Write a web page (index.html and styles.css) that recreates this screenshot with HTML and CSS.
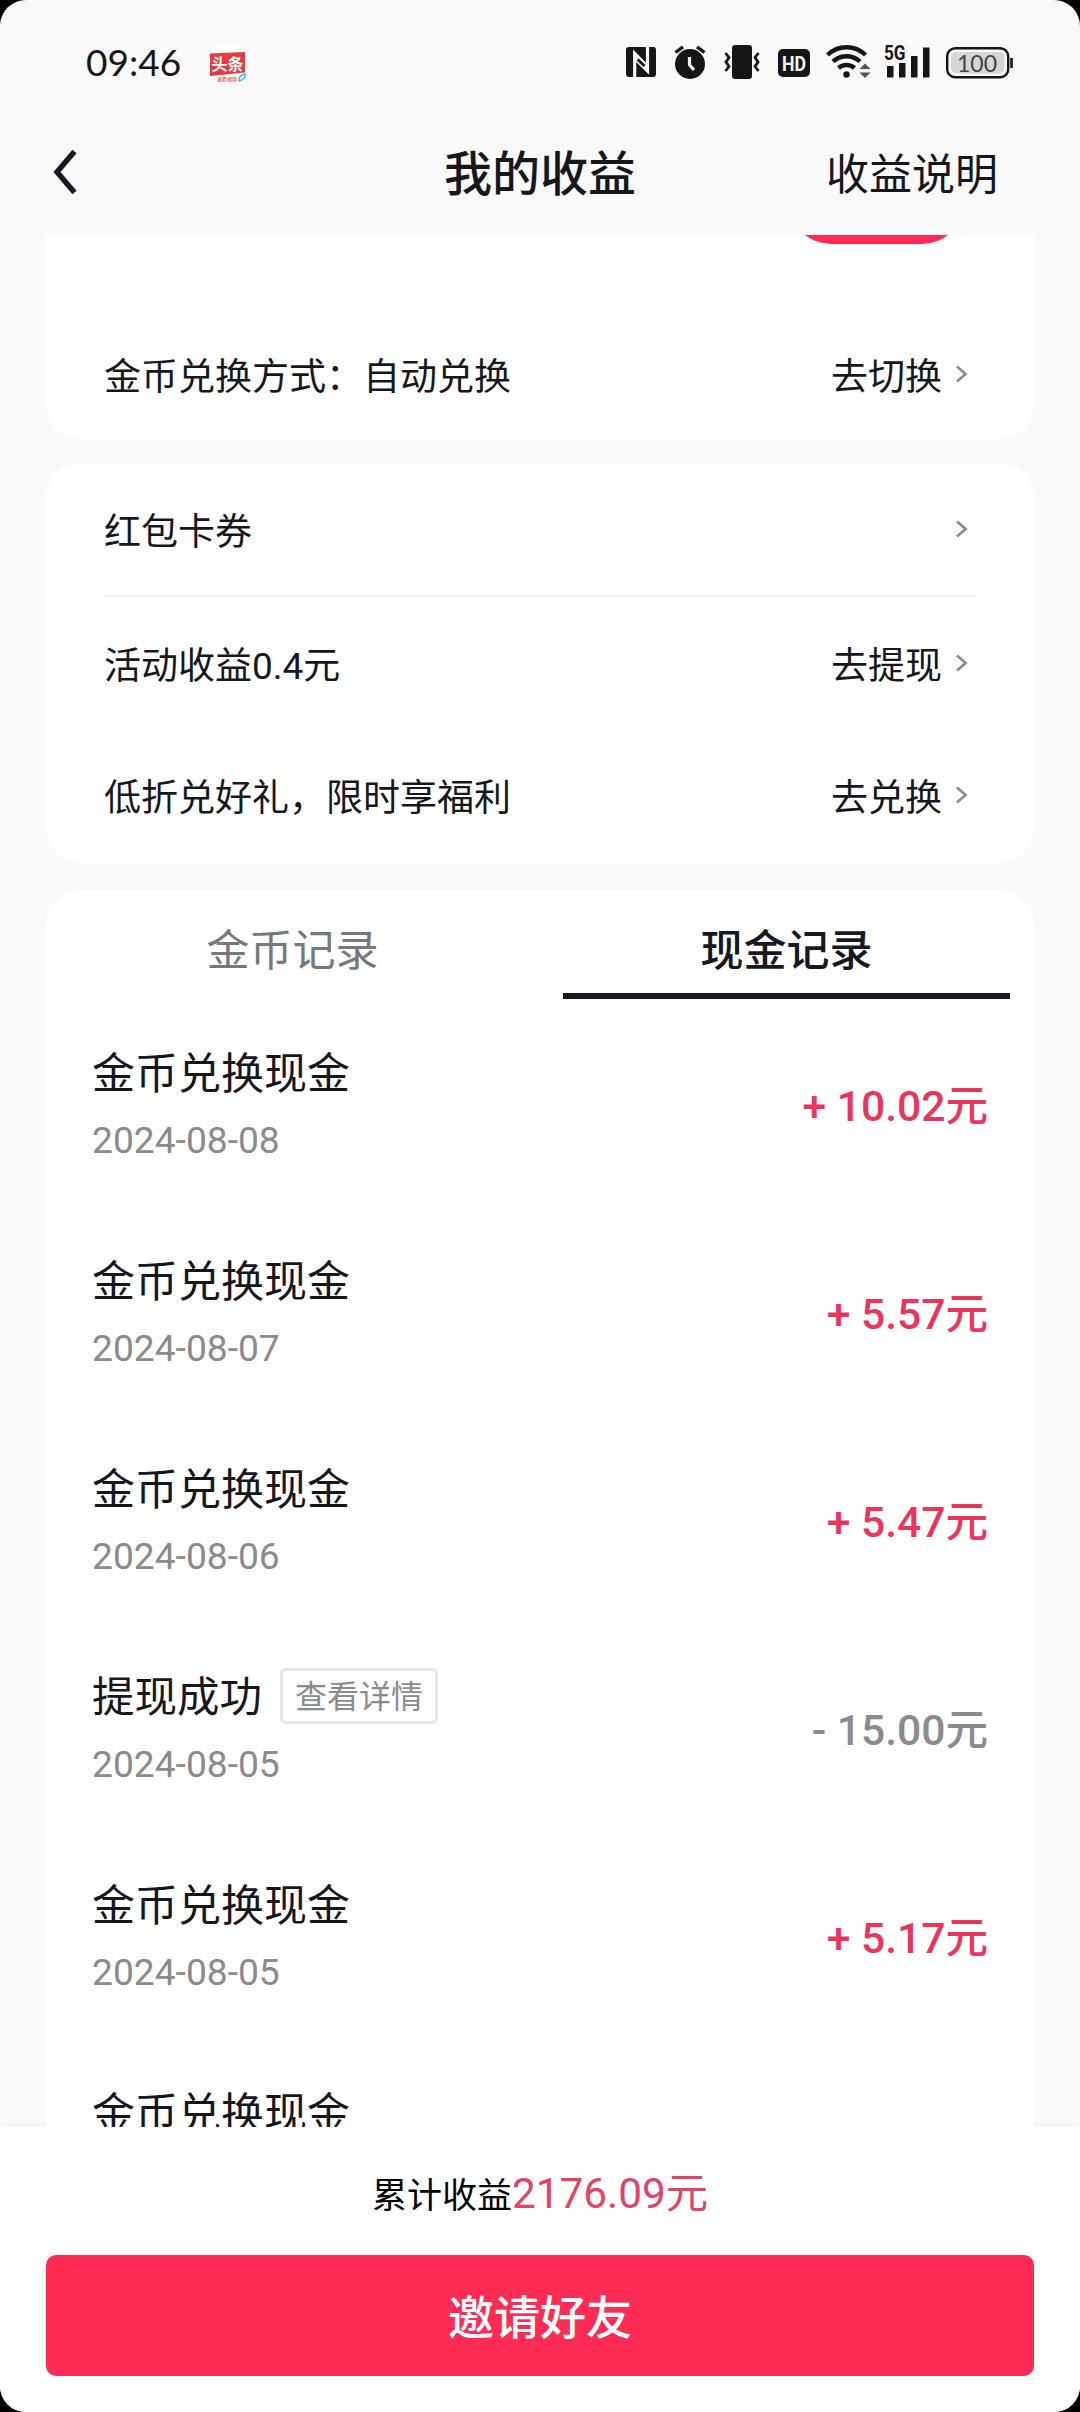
FILE: index.html
```html
<!DOCTYPE html>
<html lang="zh-CN">
<head>
<meta charset="utf-8">
<title>我的收益</title>
<link rel="stylesheet" href="styles.css">
</head>
<body>
<svg width="0" height="0" class="defs" aria-hidden="true">
  <symbol id="chevron" viewBox="0 0 12 18"><path d="M1 1.500 9.500 9 1 16.500" fill="none" stroke="#8d8d8f" stroke-width="2.800"/></symbol>
</svg>
<div class="screen">
  <div class="status">
    <span class="clock">09:46</span>
    <svg class="app" width="38" height="38" viewBox="0 0 38 38">
      <rect width="38" height="38" rx="8" fill="#fff"/>
      <path d="M1 8.500 36 7V27.500L1 31Z" fill="#e63a42"/>
      <text x="18.500" y="24.500" text-anchor="middle" class="app-name">头条</text>
      <text x="18" y="35.500" text-anchor="middle" class="app-sub">速看视频</text>
      <path d="M30 36q-1-5 6-7q1 5-6 7Z" fill="none" stroke="#3bbbd0" stroke-width="1.500"/>
    </svg>
    <div class="tray">
      <svg class="nfc" width="30" height="30" viewBox="0 0 30 30">
        <rect width="30" height="30" rx="3" fill="#161616"/>
        <path d="M8.700 30V6.500L21.500 19.500" fill="none" stroke="#f9f9f9" stroke-width="3.200"/>
        <path d="M21.500 0V24L9 11.500" fill="none" stroke="#f9f9f9" stroke-width="3.200"/>
        <path d="M11.700 12.500 18.500 19" stroke="#161616" stroke-width="3"/>
      </svg>
      <svg class="alarm" width="32" height="34" viewBox="0 0 32 34">
        <circle cx="16" cy="19" r="15" fill="#161616"/>
        <path d="M1.500 7.500 9 1.800M30.500 7.500 23 1.800" stroke="#161616" stroke-width="3.400"/>
        <path d="M15.500 12V20L20 25" fill="none" stroke="#f9f9f9" stroke-width="3.200"/>
      </svg>
      <svg class="vibrate" width="36" height="34" viewBox="0 0 36 34">
        <rect x="8" y="0" width="20" height="34" rx="3" fill="#161616"/>
        <path d="M1.500 8 5 12.500 2 17 5 21.500 1.500 26M34.500 8 31 12.500 34 17 31 21.500 34.500 26" fill="none" stroke="#161616" stroke-width="2.800"/>
      </svg>
      <svg class="hd" width="32" height="28" viewBox="0 0 32 28">
        <rect width="32" height="28" rx="5" fill="#161616"/>
        <text x="16" y="21.500" text-anchor="middle" textLength="24" lengthAdjust="spacingAndGlyphs" class="hd-text">HD</text>
      </svg>
      <svg class="wifi" width="46" height="34" viewBox="0 0 46 34">
        <path d="M1.500 11a27 27 0 0 1 38 0M7 17.500a20 20 0 0 1 27 0M12.500 24a12 12 0 0 1 16 0" fill="none" stroke="#161616" stroke-width="4.400"/>
        <circle cx="20.500" cy="30.500" r="3.200" fill="#161616"/>
        <path d="M33.500 25 39 19.500 44.500 25ZM33.500 28.500 39 34 44.500 28.500Z" fill="#555"/>
      </svg>
      <svg class="signal" width="46" height="36" viewBox="0 -2 46 36">
        <text x="0" y="15.500" textLength="21.500" lengthAdjust="spacingAndGlyphs" class="net">5G</text>
        <path d="M3 22h6.500v11.500H3ZM15 19h6.500v14.500H15ZM27 12h6.500v21.500H27ZM39 3.500h6.500v30H39Z" fill="#161616"/>
      </svg>
      <svg class="battery" width="68" height="32" viewBox="0 0 68 32">
        <rect x="1.200" y="1.200" width="61" height="29" rx="8" fill="#f9f9f9" stroke="#161616" stroke-width="2.400"/>
        <rect x="5" y="5" width="53.500" height="21.500" rx="5" fill="#d6d6d6"/>
        <path d="M65.500 11v10" stroke="#161616" stroke-width="2.600"/>
        <text x="31" y="24.500" text-anchor="middle" textLength="40" lengthAdjust="spacingAndGlyphs" class="level">100</text>
      </svg>
    </div>
  </div>

  <header class="nav">
    <svg class="back" width="24" height="46" viewBox="0 0 24 46"><path d="M21.500 2.500 4 23 21.500 43.500" fill="none" stroke="#161823" stroke-width="5.400"/></svg>
    <h1 class="title">我的收益</h1>
    <span class="help">收益说明</span>
  </header>

  <main class="content">
    <section class="card balance">
      <div class="pill"></div>
      <div class="row"><span class="label">金币兑换方式：自动兑换</span><span class="label">去切换</span><svg class="chevron"><use href="#chevron"/></svg></div>
    </section>

    <section class="card links">
      <div class="row divided"><span class="label">红包卡券</span><svg class="chevron"><use href="#chevron"/></svg></div>
      <div class="row"><span class="label">活动收益0.4元</span><span class="label">去提现</span><svg class="chevron"><use href="#chevron"/></svg></div>
      <div class="row"><span class="label">低折兑好礼，限时享福利</span><span class="label">去兑换</span><svg class="chevron"><use href="#chevron"/></svg></div>
    </section>

    <section class="card records">
      <div class="tabs"><div class="tab">金币记录</div><div class="tab active">现金记录</div></div>
      <div class="record"><div class="info"><div class="name">金币兑换现金</div><div class="date">2024-08-08</div></div><div class="amount">+ 10.02元</div></div>
      <div class="record"><div class="info"><div class="name">金币兑换现金</div><div class="date">2024-08-07</div></div><div class="amount">+ 5.57元</div></div>
      <div class="record"><div class="info"><div class="name">金币兑换现金</div><div class="date">2024-08-06</div></div><div class="amount">+ 5.47元</div></div>
      <div class="record"><div class="info"><div class="name"><span class="success">提现成功</span><span class="detail">查看详情</span></div><div class="date">2024-08-05</div></div><div class="amount out">- 15.00元</div></div>
      <div class="record"><div class="info"><div class="name">金币兑换现金</div><div class="date">2024-08-05</div></div><div class="amount">+ 5.17元</div></div>
      <div class="record"><div class="info"><div class="name">金币兑换现金</div></div></div>
    </section>
  </main>

  <footer class="footer">
    <div class="total">累计收益<span class="sum">2176.09元</span></div>
    <div class="invite">邀请好友</div>
  </footer>
</div>
</body>
</html>
```
FILE: styles.css
```css
* { box-sizing: border-box; }

body {
  margin: 0;
  background: #000;
  color: #16171c;
  font-family: Roboto, "Noto Sans CJK SC", sans-serif;
}

svg { display: block; flex: none; }
.defs { position: absolute; }

.screen {
  width: 1080px;
  height: 2412px;
  display: flex;
  flex-direction: column;
  overflow: hidden;
  border-radius: 26px;
  background: #f9f9f9;
}

/* Status bar */
.status {
  height: 125px;
  flex: none;
  display: flex;
  align-items: flex-start;
  padding: 44px 66px 0 86px;
}
.clock {
  width: 123px;
  margin-top: -1px;
  font: 37px/38px Lato, sans-serif;
  color: #161616;
}
.app { margin-top: 1px; }
.app-name { font: 700 16px "Noto Sans CJK SC", sans-serif; fill: #fff; }
.app-sub { font: 700 5px "Noto Sans CJK SC", sans-serif; fill: #ee6a55; }
.tray { display: flex; margin-left: auto; }
.nfc { margin: 3px 18px 0 0; }
.alarm { margin: 1px 18px 0 0; }
.vibrate { margin: 1px 18px 0 0; }
.hd { margin: 5px 16px 0 0; }
.wifi { margin: 0 12px 0 0; }
.signal { margin: -2px 16px 0 0; }
.battery { margin-top: 3px; }
.hd-text { font: 700 21px Roboto, sans-serif; fill: #f9f9f9; }
.net { font: 700 20px Roboto, sans-serif; fill: #161616; }
.level { font: 400 24px Lato, sans-serif; fill: #444; }

/* Title bar */
.nav {
  height: 110px;
  flex: none;
  display: grid;
  grid-template-columns: 1fr auto 1fr;
  align-items: center;
  padding: 0 82px 14px;
}
.back { margin: -2px 0 0 -29px; }
.title {
  margin: 0;
  padding-top: 4px;
  font-size: 48px;
  font-weight: 500;
  line-height: 60px;
}
.help {
  justify-self: end;
  padding-top: 4px;
  font-size: 43px;
  line-height: 60px;
}

/* Scrolling area */
.content {
  flex: 1;
  min-height: 0;
  overflow: hidden;
  padding: 0 46px;
}
.card {
  overflow: hidden;
  border-radius: 36px;
  background: #fff;
}
.balance {
  height: 205px;
  display: flex;
  flex-direction: column;
  border-top-left-radius: 0;
  border-top-right-radius: 0;
}
.pill {
  width: 175px;
  height: 84px;
  margin: -75px 0 0 743px;
  border-radius: 42px;
  background: #fe2c55;
}
.balance .row { margin-top: auto; }
.links { margin-top: 23px; padding-bottom: 2px; }
.row {
  height: 132px;
  display: flex;
  align-items: center;
  margin: 0 58px;
  padding-right: 8px;
}
.row.divided { height: 134px; border-bottom: 2px solid #f3f3f3; }
.label {
  padding-top: 8px;
  font-size: 37px;
  line-height: 50px;
}
.label:first-child { margin-right: auto; }
.chevron { width: 12px; height: 18px; margin-left: 14px; }

/* Records */
.records { margin-top: 27px; }
.tabs {
  display: grid;
  grid-template-columns: 1fr 1fr;
  gap: 47px;
  padding: 0 24px 3px 23px;
}
.tab {
  height: 109px;
  padding-top: 20px;
  border-bottom: 6px solid transparent;
  color: #77787b;
  font-size: 43px;
  font-weight: 400;
  line-height: 83px;
  text-align: center;
}
.tab.active {
  border-color: #161823;
  color: #161823;
  font-weight: 500;
}
.record {
  height: 208px;
  display: flex;
  align-items: center;
  justify-content: space-between;
  padding: 0 46px;
}
.record:last-child { align-items: flex-start; padding-top: 39px; }
.name {
  display: flex;
  align-items: center;
  height: 66px;
  font-size: 43px;
  line-height: 66px;
}
.success { font-size: 42.5px; }
.detail {
  height: 56px;
  margin: -4px 0 0 18px;
  padding: 1px 12px 0;
  border: 3px solid #e5e5e6;
  border-radius: 6px;
  color: #8a8b8f;
  font-size: 32px;
  line-height: 50px;
}
.date {
  height: 64px;
  padding-top: 1px;
  color: #8b8b8d;
  font-size: 37.2px;
  line-height: 64px;
}
.amount {
  color: #e8365c;
  font-size: 42.6px;
  font-weight: 500;
  line-height: 58px;
  padding-bottom: 1px;
}
.amount.out { color: #8b8b8d; }

/* Bottom bar */
.footer {
  position: relative;
  height: 285px;
  flex: none;
  padding: 37px 46px 0;
  background: #fff;
  box-shadow: 0 0 14px rgba(0, 0, 0, 0.03);
}
.total {
  height: 60px;
  color: #000;
  font-size: 35px;
  line-height: 60px;
  text-align: center;
}
.sum { color: #e0446a; font-size: 42.3px; }
.invite {
  height: 121px;
  margin-top: 31px;
  padding-top: 3px;
  border-radius: 10px;
  background: #fe2c55;
  color: #fff;
  font-size: 46px;
  font-weight: 500;
  line-height: 121px;
  text-align: center;
}
```
